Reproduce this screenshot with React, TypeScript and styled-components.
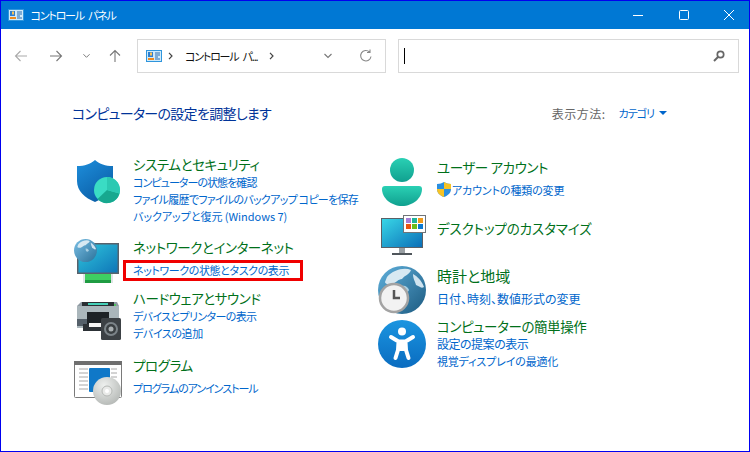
import React from 'react';
import styled, { createGlobalStyle } from 'styled-components';

const GlobalStyle = createGlobalStyle`
    html, body {
        margin: 0;
        padding: 0;
        background: #fff;
    }
    * {
        box-sizing: border-box;
    }
`;

const Window = styled.div`
    width: 750px;
    height: 452px;
    border: 1px solid #0000f0;
    background: #fff;
    font-family: 'Noto Sans CJK JP', 'Noto Sans', sans-serif;
    font-feature-settings: 'palt';
    overflow: hidden;
`;

const TitleBar = styled.div`
    height: 28px;
    background: #0078d4;
    display: flex;
    align-items: center;
    gap: 5.5px;
    padding-left: 7px;
    color: #fff;
`;

const TitleText = styled.span`
    margin-left: 1px;
    font-size: 11px;
    letter-spacing: -1.2px;
    word-spacing: 3px;
    flex: 1;
`;

const WindowButton = styled.div`
    width: 40px;
    height: 28px;
    display: flex;
    align-items: center;
    justify-content: center;
`;

const Toolbar = styled.div`
    height: 44px;
    display: flex;
    align-items: center;
    padding: 10px 10px 0 3px;
`;

const NavButton = styled.div<{ $w: number }>`
    width: ${({ $w }) => $w}px;
    height: 33px;
    display: flex;
    align-items: center;
    justify-content: center;
`;

const AddressBox = styled.div`
    width: 249px;
    height: 34px;
    margin-left: 5px;
    border: 1px solid #d9d9d9;
    display: flex;
    align-items: center;
    padding-left: 8px;
    font-size: 11px;
    letter-spacing: -1.2px;
    word-spacing: 3px;
    color: #111;
`;

const Crumb = styled.span`
    display: flex;
    margin: 0 12px 0 6px;
`;

const CrumbLabel = styled.span`
    margin-right: 6px;
`;

const AddressTail = styled.div`
    margin-left: auto;
    display: flex;
    align-items: center;
    gap: 27px;
    padding-right: 12px;
`;

const SearchBox = styled.div`
    flex: 1;
    height: 34px;
    margin-left: 12px;
    border: 1px solid #d9d9d9;
    display: flex;
    align-items: center;
    justify-content: space-between;
    padding: 0 13px 0 5px;
`;

const Caret = styled.div`
    width: 1px;
    height: 16px;
    background: #000;
`;

const Content = styled.div`
    padding: 0 0 0 71px;
`;

const HeaderRow = styled.div`
    display: flex;
    align-items: center;
    justify-content: space-between;
    height: 24px;
    margin-top: 28px;
    padding-right: 82px;
`;

const Heading = styled.div`
    font-size: 14px;
    letter-spacing: -0.7px;
    color: #003399;
`;

const ViewBy = styled.div`
    display: flex;
    align-items: center;
    font-size: 12px;
    letter-spacing: 0.5px;
    color: #666;
`;

const ViewValue = styled.span`
    margin-left: 13px;
    margin-right: 5px;
    font-size: 11px;
    letter-spacing: -1px;
    color: #0066cc;
`;

const CaretDown = styled.span`
    width: 0;
    height: 0;
    border-left: 4px solid transparent;
    border-right: 4px solid transparent;
    border-top: 4px solid #0066cc;
`;

const Columns = styled.div`
    display: grid;
    grid-template-columns: 306px 1fr;
`;

const Column = styled.div<{ $top: number; $left?: number }>`
    padding-top: ${({ $top }) => $top}px;
    padding-left: ${({ $left }) => $left ?? 0}px;
    display: flex;
    flex-direction: column;
`;

const Category = styled.div<{ $h: number }>`
    height: ${({ $h }) => $h}px;
    display: flex;
    align-items: flex-start;
    gap: 11px;
`;

const IconCell = styled.div<{ $top: number }>`
    width: 48px;
    height: 48px;
    flex: none;
    margin-top: ${({ $top }) => $top}px;
`;

const TextStack = styled.div`
    display: flex;
    flex-direction: column;
    align-items: flex-start;
`;

const CategoryTitle = styled.div<{ $size?: number; $ls?: number }>`
    height: 19px;
    line-height: 20px;
    font-size: ${({ $size }) => $size ?? 13.5}px;
    letter-spacing: ${({ $ls }) => $ls ?? -0.4}px;
    color: #00701a;
    white-space: nowrap;
`;

const LinkRow = styled.div<{ $single?: boolean; $size?: number; $ls?: number }>`
    position: relative;
    display: flex;
    align-items: center;
    height: 17px;
    margin-top: ${({ $single }) => ($single ? 5 : 0)}px;
    font-size: ${({ $size }) => $size ?? 11}px;
    letter-spacing: ${({ $ls }) => $ls ?? -0.4}px;
    color: #0066cc;
    white-space: nowrap;
`;

const RedBox = styled.div`
    position: absolute;
    left: -10px;
    top: -1px;
    width: 180px;
    height: 21px;
    border: 3px solid #f00000;
`;

const ShieldSmall = styled.svg`
    margin-right: 1px;
`;

const Arrow = ({ dir, color }: { dir: 'left' | 'right' | 'up'; color: string }) => {
    const rot = dir === 'left' ? 0 : dir === 'right' ? 180 : 90;
    return (
        <svg width="14" height="14" viewBox="0 0 14 14" style={{ transform: `rotate(${rot}deg)` }}>
            <path d="M1.5 7h11.5M6.5 2L1.5 7l5 5" fill="none" stroke={color} strokeWidth="1.1" />
        </svg>
    );
};

const Chevron = ({ color, w = 8 }: { color: string; w?: number }) => (
    <svg width={w} height="6" viewBox="0 0 8 6">
        <path d="M.5 1L4 4.5 7.5 1" fill="none" stroke={color} strokeWidth="1.1" />
    </svg>
);

const CrumbArrow = () => (
    <svg width="5" height="8" viewBox="0 0 5 8">
        <path d="M1 .8L4 4 1 7.2" fill="none" stroke="#444" strokeWidth="1.2" />
    </svg>
);

const ControlPanelSmall = () => (
    <svg width="16" height="12" viewBox="0 0 16 12">
        <rect x=".5" y=".5" width="15" height="11" fill="#cfeafa" stroke="#2f95dc" />
        <rect x="2" y="2" width="5" height="5" fill="#2f7fd0" />
        <path d="M4 2.5h2v3H4z" fill="#f7c35a" />
        <rect x="2" y="8" width="6" height="2" fill="#ee8a1d" />
        <path d="M9 3h5M9 5h5M9 7h3M9 9h5" stroke="#2b6cb0" strokeWidth="1" />
    </svg>
);

const ShieldIcon = () => (
    <svg width="48" height="48" viewBox="0 0 48 48">
        <defs>
            <linearGradient id="sh" x1="0" y1="0" x2="0.6" y2="1">
                <stop offset="0" stopColor="#1e8fdc" />
                <stop offset="1" stopColor="#0b5fa8" />
            </linearGradient>
        </defs>
        <path d="M21 2c5 4 10 6 18 6v15c0 10-8 17-18 21C11 40 3 33 3 23V8c8 0 13-2 18-6z" fill="url(#sh)" />
        <circle cx="33" cy="32" r="13" fill="#3adcc4" />
        <path d="M33 32l12.500 3.500A13 13 0 0 1 23.500 41z" fill="#17a88f" />
        <path d="M33 32V19a13 13 0 0 1 12.500 16.500z" fill="#2cc9b2" />
    </svg>
);

// world map patches in a 48 unit box, scaled to the size asked for
const Globe = ({ id, size, from, to }: { id: string; size: number; from: string; to: string }) => (
    <g transform={`scale(${size / 48})`}>
        <defs>
            <linearGradient id={id} x1="0" y1="0" x2="1" y2="1">
                <stop offset="0" stopColor={from} />
                <stop offset="1" stopColor={to} />
            </linearGradient>
        </defs>
        <circle cx="24" cy="24" r="24" fill={`url(#${id})`} />
        <path d="M9 11C15 4 26 1 33 4c-2 5-6 5-9 9-4 0-6 4-10 5-3 1-7 0-7-2z" fill="#d8e9f2" />
        <path d="M35 8c4 2 9 7 11 13-3 2-5-1-8-2-1-4-3-6-3-11z" fill="#cfe3ef" />
        <path d="M24 20c3-1 6 1 7 4-1 3-4 3-6 1z" fill="#a9cfe2" />
    </g>
);

const NetworkIcon = () => (
    <svg width="48" height="48" viewBox="0 0 48 48">
        <defs>
            <linearGradient id="scr" x1="0" y1="0" x2="1" y2="1">
                <stop offset="0" stopColor="#2fc6dc" />
                <stop offset="1" stopColor="#0f76b8" />
            </linearGradient>
        </defs>
        <rect x="3" y="4" width="42" height="31" fill="#58626c" />
        <rect x="4.500" y="5.500" width="39" height="28" fill="url(#scr)" />
        <rect x="9" y="35" width="30" height="9" fill="#dfe4e6" />
        <rect x="11" y="35" width="26" height="9" fill="#3ecf62" />
        <rect x="11" y="41" width="26" height="3" fill="#1f9c42" />
        <Globe id="gl1" size={23} from="#7cc0e6" to="#2a7199" />
    </svg>
);

const PrinterIcon = () => (
    <svg width="48" height="48" viewBox="0 0 48 48">
        <path d="M7 5h36l2 4v20H3V9z" fill="#8f9aa3" />
        <rect x="3" y="9" width="42" height="22" fill="#aab6bb" />
        <rect x="8" y="5" width="32" height="4" fill="#2a2f33" />
        <rect x="14" y="6" width="20" height="2" fill="#45d0b8" />
        <circle cx="41" cy="8" r="1" fill="#3fd24f" />
        <rect x="3" y="22" width="42" height="7" fill="#55606a" />
        <rect x="13" y="15" width="22" height="15" fill="#1d2226" />
        <rect x="9" y="27" width="26" height="7" fill="#2c3136" />
        <rect x="15" y="26" width="18" height="4" fill="#f4f4f4" />
        <rect x="27" y="21" width="20" height="22" rx="1.500" fill="#3c4145" />
        <circle cx="37" cy="32" r="7" fill="#7b8388" />
        <circle cx="37" cy="32" r="5" fill="#3a3f42" />
        <circle cx="37" cy="32" r="2.500" fill="#a9afb2" />
    </svg>
);

const ProgramIcon = () => (
    <svg width="48" height="48" viewBox="0 0 48 48">
        <defs>
            <radialGradient id="disc" cx="0.4" cy="0.3" r="0.9">
                <stop offset="0" stopColor="#eef0ee" />
                <stop offset="1" stopColor="#a9adaa" />
            </radialGradient>
        </defs>
        <rect x=".5" y="3.500" width="47" height="36" rx="1" fill="#fff" stroke="#7a7a7a" />
        <rect x="0" y="3" width="48" height="4" fill="#6f6f6f" />
        <path d="M5 11h9M5 15h9M5 19h9M5 23h9M5 27h9M5 31h9M37 11h6M37 15h6M37 19h6" stroke="#a8a8a8" />
        <rect x="15" y="10" width="21" height="24" rx="1" fill="#1078c8" />
        <circle cx="33" cy="33" r="14" fill="url(#disc)" />
        <circle cx="33" cy="33" r="5" fill="#e9eae8" stroke="#b5b8b5" />
        <circle cx="33" cy="33" r="2" fill="#fff" />
    </svg>
);

const UserIcon = () => (
    <svg width="48" height="48" viewBox="0 0 48 48">
        <defs>
            <linearGradient id="usr" x1="0" y1="0" x2="0" y2="1">
                <stop offset="0" stopColor="#2ad0b4" />
                <stop offset="1" stopColor="#10a08f" />
            </linearGradient>
        </defs>
        <circle cx="24" cy="12" r="12" fill="url(#usr)" />
        <path d="M4 31c0-2 1-3 3-3h34c2 0 3 1 3 3 0 9-9 17-20 17S4 40 4 31z" fill="url(#usr)" />
    </svg>
);

const DesktopIcon = () => (
    <svg width="48" height="48" viewBox="0 0 48 48">
        <defs>
            <linearGradient id="dsk" x1="0" y1="0" x2="1" y2="1">
                <stop offset="0" stopColor="#38d6e6" />
                <stop offset="1" stopColor="#0b6fb8" />
            </linearGradient>
        </defs>
        <rect x="3" y="7" width="42" height="30" fill="#5a6067" />
        <rect x="4" y="8" width="40" height="28" fill="url(#dsk)" />
        <rect x="21" y="37" width="6" height="5" fill="#9aa0a4" />
        <rect x="14" y="42" width="20" height="2" fill="#50565b" />
        <rect x="25.500" y="4.500" width="22" height="17" fill="#fff" stroke="#6f7478" />
        <rect x="28" y="7" width="5" height="5" fill="#a67dd8" />
        <rect x="34" y="7" width="5" height="5" fill="#1fb39a" />
        <rect x="40" y="7" width="5" height="5" fill="#f09a1a" />
        <rect x="28" y="13" width="5" height="5" fill="#e8540f" />
        <rect x="34" y="13" width="5" height="5" fill="#6cbb1c" />
        <rect x="40" y="13" width="5" height="5" fill="#0a78d0" />
    </svg>
);

const ClockIcon = () => (
    <svg width="48" height="48" viewBox="0 0 48 48">
        <Globe id="gl2" size={48} from="#5fb0dc" to="#1c5a80" />
        <circle cx="16" cy="32" r="14" fill="#f2f2f2" stroke="#a3a3a3" strokeWidth="2.500" />
        <path d="M16 24v8h6" fill="none" stroke="#555" strokeWidth="2.500" />
    </svg>
);

const AccessIcon = () => (
    <svg width="48" height="48" viewBox="0 0 48 48">
        <defs>
            <linearGradient id="acc" x1="0" y1="0" x2="0" y2="1">
                <stop offset="0" stopColor="#1b95e0" />
                <stop offset="1" stopColor="#0a6cc0" />
            </linearGradient>
        </defs>
        <circle cx="24" cy="24" r="24" fill="url(#acc)" />
        <circle cx="24" cy="11.500" r="4" fill="#fff" />
        <path
            d="M13 17l7.500 4.500h7L35 17M20.500 22l-.5 8-2.500 8M27.500 22l.5 8 2.500 8"
            fill="none"
            stroke="#fff"
            strokeWidth="4"
            strokeLinecap="round"
            strokeLinejoin="round"
        />
        <path d="M19.500 21h9v10h-9z" fill="#fff" />
    </svg>
);

export default function App() {
    return (
        <>
            <GlobalStyle />
            <Window>
                <TitleBar>
                    <ControlPanelSmall />
                    <TitleText>コントロール パネル</TitleText>
                    <WindowButton>
                        <svg width="10" height="10" viewBox="0 0 10 10">
                            <path d="M0 5.500h10" stroke="#fff" />
                        </svg>
                    </WindowButton>
                    <WindowButton>
                        <svg width="10" height="10" viewBox="0 0 10 10">
                            <rect x=".5" y=".5" width="9" height="9" rx="1" fill="none" stroke="#fff" />
                        </svg>
                    </WindowButton>
                    <WindowButton>
                        <svg width="10" height="10" viewBox="0 0 10 10">
                            <path d="M0 0l10 10M10 0L0 10" stroke="#fff" />
                        </svg>
                    </WindowButton>
                </TitleBar>

                <Toolbar>
                    <NavButton $w={34}>
                        <Arrow dir="left" color="#aaa" />
                    </NavButton>
                    <NavButton $w={36}>
                        <Arrow dir="right" color="#777" />
                    </NavButton>
                    <NavButton $w={24}>
                        <Chevron color="#777" w={7} />
                    </NavButton>
                    <NavButton $w={34}>
                        <Arrow dir="up" color="#777" />
                    </NavButton>
                    <AddressBox>
                        <ControlPanelSmall />
                        <Crumb>
                            <CrumbArrow />
                        </Crumb>
                        <CrumbLabel>コントロール パ...</CrumbLabel>
                        <Crumb>
                            <CrumbArrow />
                        </Crumb>
                        <AddressTail>
                            <Chevron color="#777" />
                            <svg width="14" height="14" viewBox="0 0 14 14">
                                <path d="M12 7.500A5.200 5.200 0 1 1 10.500 3M11 .5V3.500H8" fill="none" stroke="#888" strokeWidth="1.100" />
                            </svg>
                        </AddressTail>
                    </AddressBox>
                    <SearchBox>
                        <Caret />
                        <svg width="12" height="12" viewBox="0 0 12 12">
                            <circle cx="7.500" cy="4.500" r="3.200" fill="none" stroke="#666" strokeWidth="1.700" />
                            <path d="M5 7L1 11" stroke="#666" strokeWidth="2" />
                        </svg>
                    </SearchBox>
                </Toolbar>

                <Content>
                    <HeaderRow>
                        <Heading>コンピューターの設定を調整します</Heading>
                        <ViewBy>
                            表示方法:
                            <ViewValue>カテゴリ</ViewValue>
                            <CaretDown />
                        </ViewBy>
                    </HeaderRow>
                    <Columns>
                        <Column $top={29} $left={2}>
                            <Category $h={83}>
                                <IconCell $top={4}>
                                    <ShieldIcon />
                                </IconCell>
                                <TextStack>
                                    <CategoryTitle>システムとセキュリティ</CategoryTitle>
                                    <LinkRow $ls={-0.95}>コンピューターの状態を確認</LinkRow>
                                    <LinkRow $ls={-0.72}>ファイル履歴でファイルのバックアップ コピーを保存</LinkRow>
                                    <LinkRow $ls={-0.03}>バックアップと復元 (Windows 7)</LinkRow>
                                </TextStack>
                            </Category>
                            <Category $h={51}>
                                <IconCell $top={2}>
                                    <NetworkIcon />
                                </IconCell>
                                <TextStack>
                                    <CategoryTitle>ネットワークとインターネット</CategoryTitle>
                                    <LinkRow $single>
                                        ネットワークの状態とタスクの表示
                                        <RedBox />
                                    </LinkRow>
                                </TextStack>
                            </Category>
                            <Category $h={67}>
                                <IconCell $top={9}>
                                    <PrinterIcon />
                                </IconCell>
                                <TextStack>
                                    <CategoryTitle>ハードウェアとサウンド</CategoryTitle>
                                    <LinkRow $ls={-0.63}>デバイスとプリンターの表示</LinkRow>
                                    <LinkRow>デバイスの追加</LinkRow>
                                </TextStack>
                            </Category>
                            <Category $h={50}>
                                <IconCell $top={3}>
                                    <ProgramIcon />
                                </IconCell>
                                <TextStack>
                                    <CategoryTitle>プログラム</CategoryTitle>
                                    <LinkRow $single $ls={-1.05}>プログラムのアンインストール</LinkRow>
                                </TextStack>
                            </Category>
                        </Column>
                        <Column $top={32}>
                            <Category $h={61}>
                                <IconCell $top={1}>
                                    <UserIcon />
                                </IconCell>
                                <TextStack>
                                    <CategoryTitle>ユーザー アカウント</CategoryTitle>
                                    <LinkRow $single $ls={-0.13}>
                                        <ShieldSmall width="14" height="15" viewBox="0 0 14 15">
                                            <path d="M7 0c2 1.200 4 2 7 2v5c0 4-3 6.500-7 8-4-1.500-7-4-7-8V2c3 0 5-.8 7-2z" fill="#2b8fe0" />
                                            <path d="M7 0c2 1.200 4 2 7 2v5H7zM7 7v8c-4-1.500-7-4-7-8z" fill="#f7c325" />
                                        </ShieldSmall>
                                        アカウントの種類の変更
                                    </LinkRow>
                                </TextStack>
                            </Category>
                            <Category $h={48}>
                                <IconCell $top={-7}>
                                    <DesktopIcon />
                                </IconCell>
                                <TextStack>
                                    <CategoryTitle $ls={-0.1}>デスクトップのカスタマイズ</CategoryTitle>
                                </TextStack>
                            </Category>
                            <Category $h={50}>
                                <IconCell $top={0}>
                                    <ClockIcon />
                                </IconCell>
                                <TextStack>
                                    <CategoryTitle $size={15} $ls={0}>時計と地域</CategoryTitle>
                                    <LinkRow $single $size={12} $ls={0}>日付、時刻、数値形式の変更</LinkRow>
                                </TextStack>
                            </Category>
                            <Category $h={51}>
                                <IconCell $top={4}>
                                    <AccessIcon />
                                </IconCell>
                                <TextStack>
                                    <CategoryTitle>コンピューターの簡単操作</CategoryTitle>
                                    <LinkRow $size={12} $ls={-0.5}>設定の提案の表示</LinkRow>
                                    <LinkRow $ls={-0.15}>視覚ディスプレイの最適化</LinkRow>
                                </TextStack>
                            </Category>
                        </Column>
                    </Columns>
                </Content>
            </Window>
        </>
    );
}
